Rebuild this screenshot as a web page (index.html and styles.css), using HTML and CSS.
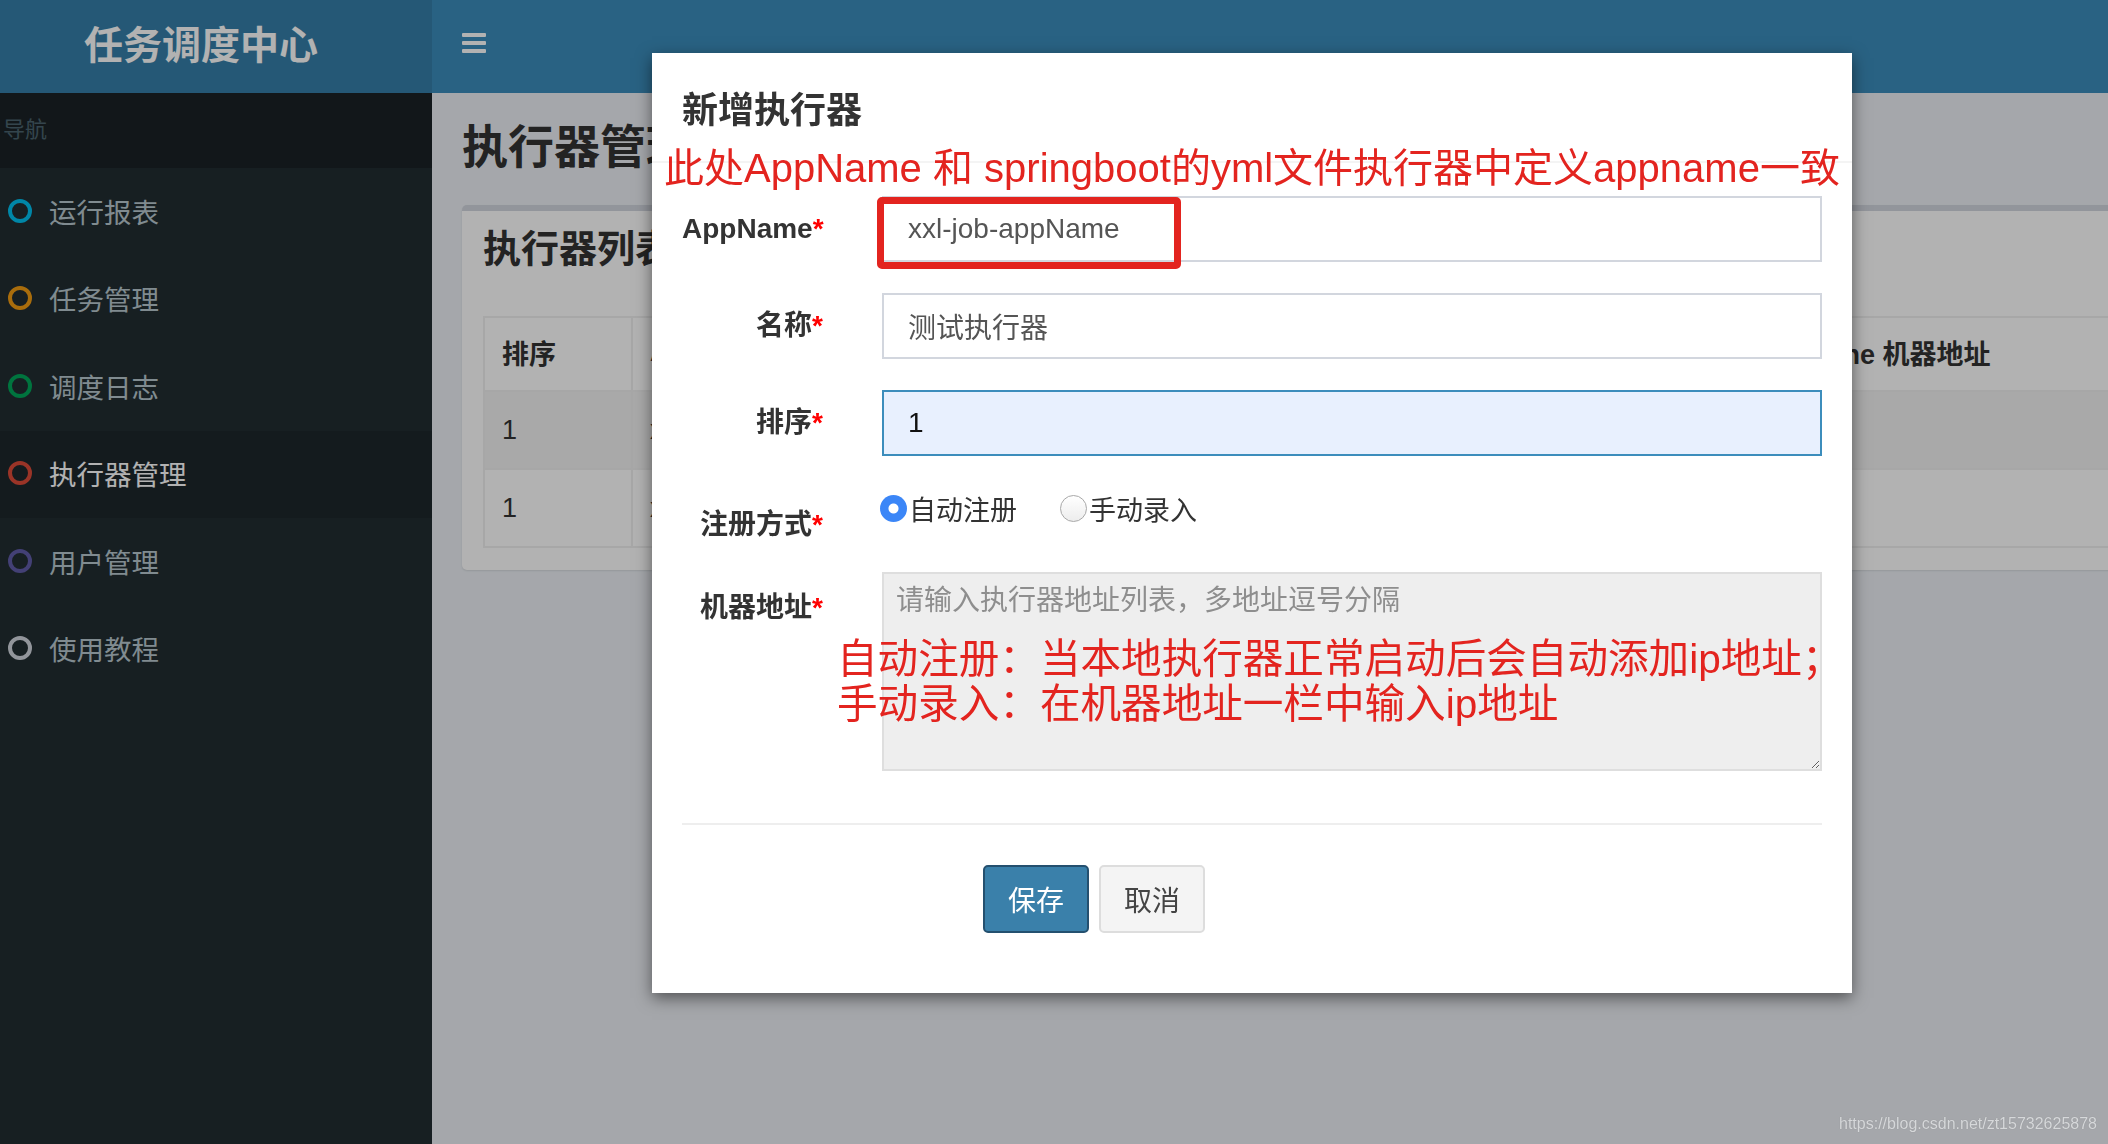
FILE: index.html
```html
<!DOCTYPE html>
<html lang="zh-CN">
<head>
<meta charset="utf-8">
<title>任务调度中心</title>
<link rel="stylesheet" href="styles.css">
</head>
<body>
<div class="app">
  <header class="topbar">
    <div class="logo">任务调度中心</div>
    <nav class="navbar">
      <span class="toggle"><i></i><i></i><i></i></span>
    </nav>
  </header>
  <div class="main">
    <aside class="sidebar">
      <div class="nav-header">导航</div>
      <ul class="menu">
        <li><span class="dot aqua"></span><span>运行报表</span></li>
        <li><span class="dot orange"></span><span>任务管理</span></li>
        <li><span class="dot green"></span><span>调度日志</span></li>
        <li class="active"><span class="dot red"></span><span>执行器管理</span></li>
        <li><span class="dot purple"></span><span>用户管理</span></li>
        <li><span class="dot gray"></span><span>使用教程</span></li>
      </ul>
    </aside>
    <section class="content">
      <h1 class="page-title">执行器管理</h1>
      <div class="box">
        <h3 class="box-title">执行器列表</h3>
        <table class="grid">
          <colgroup>
            <col class="c1"><col class="c2"><col class="c3"><col class="c4"><col class="c5"><col class="c6">
          </colgroup>
          <thead>
            <tr><th>排序</th><th>AppName</th><th>名称</th><th>注册方式</th><th>OnLine 机器地址</th><th>操作</th></tr>
          </thead>
          <tbody>
            <tr class="odd"><td>1</td><td>xxl-job-executor-sample</td><td>示例执行器</td><td>自动注册</td><td></td><td></td></tr>
            <tr><td>1</td><td>xxl-job-appName</td><td>测试执行器</td><td>自动注册</td><td></td><td></td></tr>
          </tbody>
        </table>
      </div>
    </section>
  </div>
</div>

<div class="backdrop"></div>

<div class="modal">
  <div class="modal-header">
    <h4 class="modal-title">新增执行器</h4>
  </div>
  <form class="modal-body">
    <div class="form-row">
      <label class="label">AppName<em>*</em></label>
      <div class="field"><input type="text" value="xxl-job-appName"></div>
    </div>
    <div class="form-row">
      <label class="label">名称<em>*</em></label>
      <div class="field"><input type="text" value="测试执行器"></div>
    </div>
    <div class="form-row">
      <label class="label">排序<em>*</em></label>
      <div class="field"><input class="focused" type="text" value="1"></div>
    </div>
    <div class="form-row radio-row">
      <label class="label">注册方式<em>*</em></label>
      <div class="field radios">
        <label class="radio"><input type="radio" name="t" checked><span>自动注册</span></label>
        <label class="radio"><input type="radio" name="t"><span>手动录入</span></label>
      </div>
    </div>
    <div class="form-row last">
      <label class="label addr">机器地址<em>*</em></label>
      <div class="field"><textarea readonly placeholder="请输入执行器地址列表，多地址逗号分隔"></textarea></div>
    </div>
    <div class="divider"></div>
    <div class="actions">
      <button type="button" class="btn primary">保存</button>
      <button type="button" class="btn default">取消</button>
    </div>
  </form>

  <div class="note note-top">此处AppName 和 springboot的yml文件执行器中定义appname一致</div>
  <div class="note-box"></div>
  <div class="note note-mid">自动注册：当本地执行器正常启动后会自动添加ip地址；<br>手动录入：在机器地址一栏中输入ip地址</div>
</div>

<div class="watermark">https://blog.csdn.net/zt15732625878</div>
</body>
</html>
```

FILE: styles.css
```css
html, body {
  margin: 0;
  width: 2108px;
  height: 1144px;
  overflow: hidden;
}
body {
  position: relative;
  font-family: "Liberation Sans", "Noto Sans CJK SC", sans-serif;
  background: #ecf0f5;
  color: #333;
}

.app {
  display: flex;
  flex-direction: column;
  height: 1144px;
}

/* top bar */
.topbar {
  display: flex;
  height: 93px;
  flex: none;
}
.logo {
  width: 432px;
  flex: none;
  box-sizing: border-box;
  padding: 0 0 10px 84px;
  display: flex;
  align-items: center;
  background: #367fa9;
  color: #fff;
  font-size: 39px;
  font-weight: bold;
}
.navbar {
  flex: 1;
  background: #3c8dbc;
  padding: 33px 0 0 30px;
}
.toggle {
  display: flex;
  flex-direction: column;
  gap: 4px;
  width: 24px;
}
.toggle i {
  display: block;
  height: 4px;
  background: #fff;
  border-radius: 1px;
}

/* main */
.main {
  display: flex;
  flex: 1;
}
.sidebar {
  width: 432px;
  flex: none;
  background: #222d32;
}
.nav-header {
  height: 75px;
  box-sizing: border-box;
  display: flex;
  align-items: center;
  padding: 0 0 8px 3px;
  background: #1a2226;
  color: #4b646f;
  font-size: 22px;
}
.menu {
  list-style: none;
  margin: 0;
  padding: 0;
}
.menu li {
  height: 87.5px;
  box-sizing: border-box;
  display: flex;
  align-items: center;
  padding: 0 0 2px 8px;
  color: #b8c7ce;
  font-size: 27.5px;
}
.menu li.active {
  background: #1e282c;
  color: #fff;
}
.dot {
  width: 24px;
  height: 24px;
  box-sizing: border-box;
  border: 4px solid;
  border-radius: 50%;
  margin-right: 17px;
}
.dot.aqua { border-color: #00c0ef; }
.dot.orange { border-color: #f39c12; }
.dot.green { border-color: #00a65a; }
.dot.red { border-color: #dd4b39; }
.dot.purple { border-color: #605ca8; }
.dot.gray { border-color: #d2d6de; }

/* content */
.content {
  flex: 1;
  padding: 24px 0 0 30px;
  min-width: 0;
}
.page-title {
  margin: 0 0 28px;
  height: 60px;
  line-height: 60px;
  font-size: 46px;
  font-weight: bold;
  color: #333;
}
.box {
  width: 2070px;
  box-sizing: border-box;
  background: #fff;
  border-top: 6px solid #d2d6de;
  border-radius: 5px;
  box-shadow: 0 1px 2px rgba(0, 0, 0, 0.1);
  padding: 13px 21px 22px;
}
.box-title {
  margin: 0 0 42px;
  line-height: 50px;
  font-size: 38px;
  font-weight: bold;
  color: #333;
}
.grid {
  width: 2028px;
  table-layout: fixed;
  border-collapse: collapse;
  border: 2px solid #f0f0f0;
  font-size: 27px;
  color: #333;
}
.grid .c1 { width: 148px; }
.grid .c2 { width: 420px; }
.grid .c3 { width: 380px; }
.grid .c4 { width: 332px; }
.grid .c5 { width: 448px; }
.grid .c6 { width: 300px; }
.grid th, .grid td {
  border: 2px solid #f0f0f0;
  text-align: left;
  padding: 0 0 0 17px;
  white-space: nowrap;
  overflow: hidden;
}
.grid th {
  height: 69px;
  padding-bottom: 3px;
  font-weight: bold;
}
.grid td {
  height: 76px;
}
.grid tr.odd td {
  background: #f3f3f3;
}

/* modal */
.backdrop {
  position: fixed;
  inset: 0;
  background: rgba(0, 0, 0, 0.3);
}
.modal {
  position: absolute;
  left: 652px;
  top: 53px;
  width: 1200px;
  height: 940px;
  background: #fff;
  box-shadow: 0 5px 15px rgba(0, 0, 0, 0.5);
}
.modal-header {
  height: 110px;
  box-sizing: border-box;
  border-bottom: 2px solid #f4f4f4;
  padding-left: 30px;
  display: flex;
  align-items: center;
}
.modal-title {
  margin: 0;
  font-size: 36px;
  font-weight: bold;
  color: #333;
}
.modal-body {
  padding: 33px 30px 0;
  margin: 0;
}
.form-row {
  display: flex;
  margin-bottom: 31px;
}
.form-row.radio-row {
  margin-bottom: 19px;
}
.form-row.last {
  margin-bottom: 0;
}
.label {
  width: 141px;
  height: 66px;
  flex: none;
  text-align: right;
  line-height: 66px;
  font-size: 28px;
  font-weight: bold;
  color: #333;
  white-space: nowrap;
}
.radio-row .label {
  line-height: 76px;
}
.label.addr {
  line-height: 72px;
}
.label em {
  font-style: normal;
  color: #f00;
}
.field {
  flex: 1;
  margin-left: 59px;
}
.field input[type="text"] {
  display: block;
  width: 100%;
  height: 66px;
  box-sizing: border-box;
  border: 2px solid #d2d6de;
  padding: 0 24px;
  font-family: "Liberation Sans", "Noto Sans CJK SC", sans-serif;
  font-size: 28px;
  color: #555;
  background: #fff;
  outline: none;
}
.field input.focused {
  border-color: #3c8dbc;
  background: #e8f0fe;
  color: #111;
}
.radios {
  display: flex;
  align-items: center;
  height: 42px;
  font-size: 27px;
  color: #333;
}
.radio {
  display: flex;
  align-items: center;
  margin-right: 45px;
}
.radio input {
  appearance: none;
  -webkit-appearance: none;
  width: 27px;
  height: 27px;
  margin: 0 2px 0 -2px;
  border-radius: 50%;
  box-sizing: border-box;
  border: 1.5px solid #a8a8a8;
  background: linear-gradient(#ffffff, #ededed);
}
.radio input:checked {
  border: none;
  background: radial-gradient(circle, #fff 0 4.5px, #3b86f7 5.5px);
}
.field textarea {
  display: block;
  width: 100%;
  height: 199px;
  box-sizing: border-box;
  border: 2px solid #dedede;
  background: #eeeeee;
  padding: 8px 12px;
  font-family: "Liberation Sans", "Noto Sans CJK SC", sans-serif;
  font-size: 28px;
  line-height: 38px;
  color: #555;
  outline: none;
}
.field textarea::placeholder {
  color: #8e8e8e;
}
.divider {
  height: 2px;
  background: #eeeeee;
  margin-top: 52px;
}
.actions {
  display: flex;
  gap: 10px;
  padding: 40px 0 0 301px;
}
.btn {
  width: 106px;
  height: 68px;
  box-sizing: border-box;
  border-radius: 5px;
  font-family: "Liberation Sans", "Noto Sans CJK SC", sans-serif;
  font-size: 28px;
  padding: 0;
}
.btn.primary {
  background: #3a80aa;
  border: 2px solid #24506f;
  color: #fff;
}
.btn.default {
  background: #f4f4f4;
  border: 2px solid #dddddd;
  color: #444;
}

/* screenshot annotations drawn over the dialog */
.note {
  position: absolute;
  color: #e3241f;
  white-space: nowrap;
}
.note-top {
  left: 12px;
  top: 91px;
  font-size: 40px;
  line-height: 48px;
}
.note-mid {
  left: 185px;
  top: 584px;
  font-size: 40.6px;
  line-height: 45px;
}
.note-box {
  position: absolute;
  left: 225px;
  top: 144px;
  width: 304px;
  height: 72px;
  box-sizing: border-box;
  border: 7px solid #e3241f;
  border-radius: 5px;
}

.watermark {
  position: absolute;
  right: 11px;
  bottom: 10px;
  font-size: 16px;
  line-height: 20px;
  color: #d6d8da;
  text-shadow: 0 0 1px rgba(0, 0, 0, 0.2);
}
```
